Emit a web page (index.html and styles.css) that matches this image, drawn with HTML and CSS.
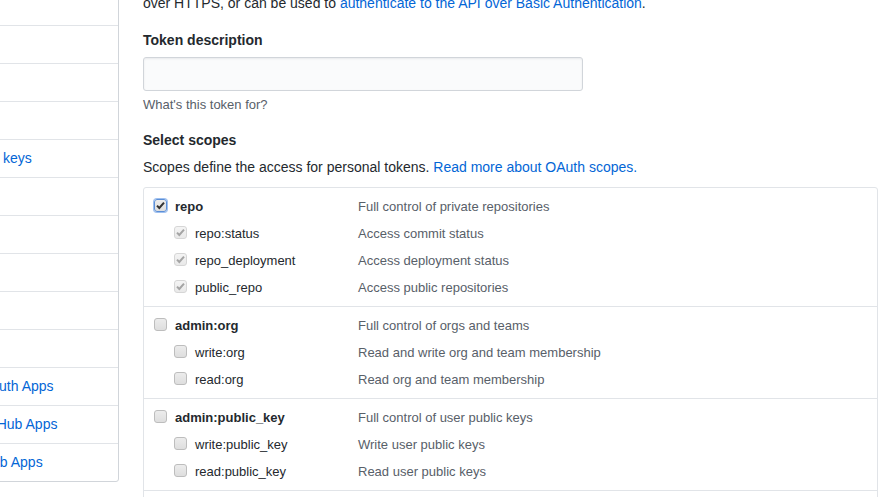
FILE: index.html
```html
<!DOCTYPE html>
<html lang="en">
<head>
<meta charset="utf-8">
<title>New personal access token</title>
<link rel="stylesheet" href="styles.css">
</head>
<body>
<div class="page">
  <nav class="menu">
    <a class="menu-item" href="#">Account</a>
    <a class="menu-item" href="#">Emails</a>
    <a class="menu-item" href="#">Notifications</a>
    <a class="menu-item" href="#">Billing</a>
    <a class="menu-item" href="#">SSH and GPG keys</a>
    <a class="menu-item" href="#">Security</a>
    <a class="menu-item" href="#">Blocked users</a>
    <a class="menu-item" href="#">Repositories</a>
    <a class="menu-item" href="#">Organizations</a>
    <a class="menu-item" href="#">Saved replies</a>
    <a class="menu-item" href="#">Authorized OAuth Apps</a>
    <a class="menu-item" href="#">Authorized GitHub Apps</a>
    <a class="menu-item" href="#">Installed GitHub Apps</a>
  </nav>

  <main class="main">
    <p class="intro">Personal access tokens function like ordinary OAuth access tokens. They can be used instead of a password for Git<br>over HTTPS, or can be used to <a href="#">authenticate to the API over Basic Authentication</a>.</p>

    <div class="form-group">
      <label class="field-label" for="desc">Token description</label>
      <input class="input" id="desc" type="text">
      <p class="note">What's this token for?</p>
    </div>

    <h3 class="field-label scopes-title">Select scopes</h3>
    <p class="scopes-help">Scopes define the access for personal tokens. <a href="#">Read more about OAuth scopes.</a></p>

    <div class="scopes">
      <div class="group">
        <div class="row">
          <span class="name main-name"><span class="cb checked focus"><svg viewBox="0 0 13 13" width="13" height="13"><path d="M3 6.6 L5.3 9 L10 3.6" fill="none" stroke="#333" stroke-width="2"/></svg></span>repo</span>
          <span class="desc">Full control of private repositories</span>
        </div>
        <div class="row">
          <span class="name sub"><span class="cb disabled"><svg viewBox="0 0 13 13" width="13" height="13"><path d="M3 6.6 L5.3 9 L10 3.6" fill="none" stroke="#a4a4a4" stroke-width="2"/></svg></span>repo:status</span>
          <span class="desc">Access commit status</span>
        </div>
        <div class="row">
          <span class="name sub"><span class="cb disabled"><svg viewBox="0 0 13 13" width="13" height="13"><path d="M3 6.6 L5.3 9 L10 3.6" fill="none" stroke="#a4a4a4" stroke-width="2"/></svg></span>repo_deployment</span>
          <span class="desc">Access deployment status</span>
        </div>
        <div class="row">
          <span class="name sub"><span class="cb disabled"><svg viewBox="0 0 13 13" width="13" height="13"><path d="M3 6.6 L5.3 9 L10 3.6" fill="none" stroke="#a4a4a4" stroke-width="2"/></svg></span>public_repo</span>
          <span class="desc">Access public repositories</span>
        </div>
      </div>

      <div class="group">
        <div class="row">
          <span class="name main-name"><span class="cb"></span>admin:org</span>
          <span class="desc">Full control of orgs and teams</span>
        </div>
        <div class="row">
          <span class="name sub"><span class="cb"></span>write:org</span>
          <span class="desc">Read and write org and team membership</span>
        </div>
        <div class="row">
          <span class="name sub"><span class="cb"></span>read:org</span>
          <span class="desc">Read org and team membership</span>
        </div>
      </div>

      <div class="group">
        <div class="row">
          <span class="name main-name"><span class="cb"></span>admin:public_key</span>
          <span class="desc">Full control of user public keys</span>
        </div>
        <div class="row">
          <span class="name sub"><span class="cb"></span>write:public_key</span>
          <span class="desc">Write user public keys</span>
        </div>
        <div class="row">
          <span class="name sub"><span class="cb"></span>read:public_key</span>
          <span class="desc">Read user public keys</span>
        </div>
      </div>

      <div class="group">
        <div class="row">
          <span class="name main-name"><span class="cb"></span>admin:repo_hook</span>
          <span class="desc">Full control of repository hooks</span>
        </div>
      </div>
    </div>
  </main>
</div>
</body>
</html>
```

FILE: styles.css
```css
* { box-sizing: border-box; }

html, body {
  margin: 0;
  padding: 0;
  background: #fff;
  overflow: hidden;
}

body {
  font-family: "Liberation Sans", Arial, sans-serif;
  font-size: 14px;
  line-height: 1.5;
  color: #24292e;
}

a { color: #0366d6; text-decoration: none; }

.page {
  display: flex;
  align-items: flex-start;
  width: 894px;
  height: 497px;
  overflow: hidden;
}

/* sidebar menu */
.menu {
  flex: 0 0 228px;
  margin-left: -109px;
  margin-top: -13px;
  border: 1px solid #d1d5da;
  border-radius: 3px;
  display: flex;
  flex-direction: column;
  background: #fff;
}

.menu-item {
  display: block;
  padding: 8px 16px;
  line-height: 21px;
  border-bottom: 1px solid #e1e4e8;
  white-space: nowrap;
}

.menu-item:last-child { border-bottom: 0; }

/* main column */
.main {
  flex: 0 0 735px;
  margin-left: 24px;
  margin-top: -28px;
}

.intro {
  margin: 0 0 16px;
  line-height: 21px;
}

.form-group { margin: 0; }

.field-label {
  display: block;
  font-size: 14px;
  font-weight: bold;
  line-height: 21px;
  margin: 0 0 6px;
}

.input {
  display: block;
  width: 440px;
  height: 34px;
  padding: 6px 8px;
  font: inherit;
  background: #fafbfc;
  border: 1px solid #d1d5da;
  border-radius: 3px;
  box-shadow: inset 0 1px 2px rgba(27,31,35,0.075);
  outline: none;
}

.note {
  margin: 4px 0 0;
  font-size: 13px;
  line-height: 20px;
  color: #586069;
}

.scopes-title {
  margin: 15px 0 6px;
}

.scopes-help {
  margin: 0 0 9px;
  line-height: 21px;
}

/* scopes table */
.scopes {
  border: 1px solid #e1e4e8;
  border-radius: 3px;
  font-size: 13px;
}

.group {
  padding: 5px 0;
  border-bottom: 1px solid #e1e4e8;
}

.group:last-child { border-bottom: 0; }

.row {
  display: grid;
  grid-template-columns: 204px 1fr;
  height: 27px;
  align-items: center;
  padding-left: 10px;
}

.name {
  display: flex;
  align-items: center;
  color: #24292e;
}

.main-name { font-weight: bold; }

.sub { padding-left: 20px; }

.desc { color: #586069; }

.cb {
  flex: 0 0 13px;
  width: 13px;
  height: 13px;
  margin: -3px 8px 0 0;
  border: 1px solid #bdbdbd;
  border-radius: 3px;
  background: linear-gradient(#ececec, #dedede);
  display: inline-flex;
  position: relative;
}

.cb svg {
  position: absolute;
  left: -1px;
  top: -1px;
}

.cb.focus {
  border-color: #5b8fd8;
  box-shadow: 0 0 0 1px #9fc0ef;
}

.cb.disabled {
  border-color: #d6d6d6;
  background: linear-gradient(#f4f4f4, #e9e9e9);
}
```
